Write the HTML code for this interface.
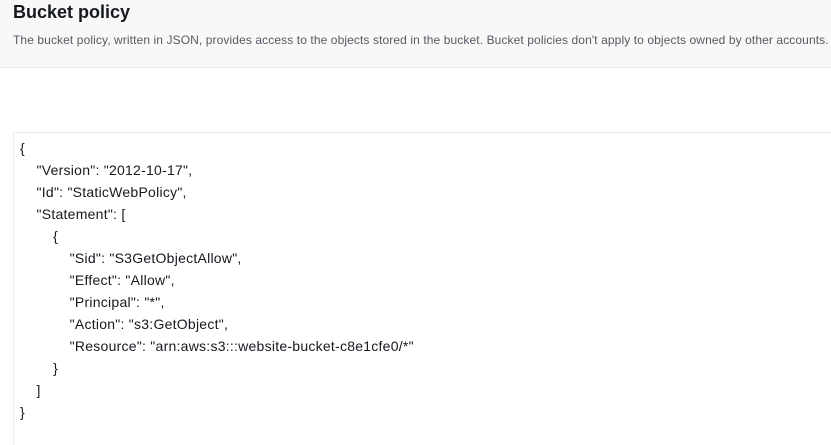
<!DOCTYPE html>
<html><head><meta charset="utf-8"><style>
html,body{margin:0;padding:0;width:831px;height:445px;overflow:hidden;background:#fff;font-family:"Liberation Sans",Arial,sans-serif;color:#16191f}
.hdr{position:absolute;left:0;top:0;width:831px;height:67px;background:#f8f8f8;border-bottom:1px solid #e5e7e8}
.t{position:absolute;left:13px;top:0px;font-size:18px;font-weight:bold;line-height:24px}
.d{position:absolute;left:13px;top:32px;font-size:12px;color:#545b64;white-space:nowrap;line-height:16px;letter-spacing:0.1px}
.box{position:absolute;left:13px;top:132px;width:818px;height:313px;border-left:1px solid #eaeded;border-top:1px solid #eaeded;box-sizing:border-box}
pre{margin:0;position:absolute;left:20px;top:137px;font-family:"Liberation Sans",Arial,sans-serif;font-size:14px;line-height:22px;color:#16191f;letter-spacing:0.25px}
</style></head><body>
<div class="hdr"><div class="t">Bucket policy</div><div class="d">The bucket policy, written in JSON, provides access to the objects stored in the bucket. Bucket policies don't apply to objects owned by other accounts.</div></div>
<div class="box"></div>
<pre>{
    "Version": "2012-10-17",
    "Id": "StaticWebPolicy",
    "Statement": [
        {
            "Sid": "S3GetObjectAllow",
            "Effect": "Allow",
            "Principal": "*",
            "Action": "s3:GetObject",
            "Resource": "arn:aws:s3:::website-bucket-c8e1cfe0/*"
        }
    ]
}</pre>
</body></html>
